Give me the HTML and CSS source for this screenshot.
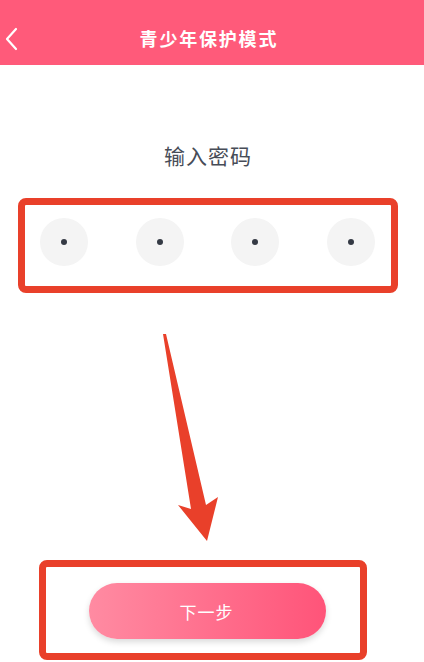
FILE: index.html
```html
<!DOCTYPE html>
<html lang="zh-CN">
<head>
<meta charset="utf-8">
<title>青少年保护模式</title>
<link rel="stylesheet" href="styles.css">
</head>
<body>
<div class="page">
  <header class="topbar">
    <svg class="back" width="20" height="24" viewBox="0 0 20 24"><path d="M12 2 L3 12 L12 22" fill="none" stroke="#fff" stroke-width="2.2" stroke-linecap="round" stroke-linejoin="round"/></svg>
    <h1 class="title">青少年保护模式</h1>
  </header>
  <main class="content">
    <div class="label">输入密码</div>
    <div class="pins">
      <span class="pin"><i class="dot"></i></span>
      <span class="pin"><i class="dot"></i></span>
      <span class="pin"><i class="dot"></i></span>
      <span class="pin"><i class="dot"></i></span>
    </div>
    <button class="next">下一步</button>
  </main>
  <div class="mark mark-pins"></div>
  <div class="mark mark-btn"></div>
  <svg class="arrow" width="424" height="662" viewBox="0 0 424 662">
    <polygon points="163,334 191,509 178,505 207,541 218,497 206,505 166,334" fill="#e9402a"/>
  </svg>
</div>
</body>
</html>
```
FILE: styles.css
```css
* { box-sizing: border-box; }
html, body { margin: 0; padding: 0; background: #fff; }
body { font-family: "Noto Sans CJK SC", "Noto Sans", sans-serif; }
.page { position: relative; width: 424px; height: 662px; overflow: hidden; }
.topbar {
  height: 65px;
  background: #ff5a7a;
  display: flex;
  align-items: center;
  justify-content: center;
  position: relative;
  padding-right: 8px;
}
.back { position: absolute; left: 4px; top: 27px; }
.title {
  margin: 0;
  color: #fff;
  font-size: 18px;
  font-weight: 700;
  letter-spacing: 1.8px;
  padding-left: 1.8px;
  line-height: 24px;
  margin-top: 10px;
}
.content { display: flex; flex-direction: column; }
.label {
  margin-top: 75px;
  text-align: center;
  font-size: 21px;
  line-height: 30px;
  color: #474c57;
  letter-spacing: 1px;
  padding-left: 1px;
  padding-right: 9px;
}
.pins {
  margin-top: 48px;
  margin-left: 40px;
  display: flex;
  gap: 47.5px;
}
.pin {
  width: 48px; height: 48px;
  border-radius: 50%;
  background: #f4f4f4;
  display: flex; align-items: center; justify-content: center;
}
.dot { width: 6px; height: 6px; border-radius: 50%; background: #343a44; }
.next {
  margin-top: 317px;
  margin-left: 89px;
  width: 237px; height: 56px;
  border: 0;
  border-radius: 28px;
  background: linear-gradient(90deg, #ff8ba2, #ff5479);
  color: #fff;
  font-family: inherit;
  font-size: 17px;
  letter-spacing: 1px;
  padding-left: 4px;
  box-shadow: 0 3px 6px rgba(0,0,0,0.15);
}
.mark {
  position: absolute;
  border: 7px solid #e9402a;
  border-radius: 8px;
}
.mark-pins { left: 18px; top: 198px; width: 380px; height: 95px; }
.mark-btn { left: 39px; top: 560px; width: 328px; height: 100px; }
.arrow { position: absolute; left: 0; top: 0; pointer-events: none; }
```
